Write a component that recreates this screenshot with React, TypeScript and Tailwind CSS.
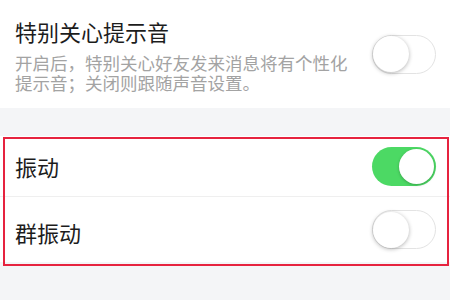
import React from "react";

function Toggle({ on }: { on: boolean }) {
  if (on) {
    return (
      <div className="w-[64px] h-[39px] rounded-full bg-[#4cd964] flex items-center justify-end p-[2px] shrink-0">
        <div className="w-[35px] h-[35px] rounded-full bg-white shadow-[0_1px_3px_rgba(0,0,0,0.25)]" />
      </div>
    );
  }
  return (
    <div className="w-[64px] h-[39px] rounded-full bg-white border-[1.5px] border-[#e3e3e3] flex items-center justify-start shrink-0">
      <div className="w-[36px] h-[36px] rounded-full bg-white shadow-[0_1px_4px_rgba(0,0,0,0.3)]" />
    </div>
  );
}

export default function App() {
  return (
    <div
      className="relative w-[450px] h-[300px] bg-[#f4f5f7] overflow-hidden"
      style={{ fontFamily: '"Noto Sans CJK SC", "Noto Sans", sans-serif' }}
    >
      <div className="bg-white h-[108px] pl-[15px] pr-[14px] flex items-center justify-between">
        <div className="w-[340px]">
          <div className="text-[22px] leading-[30px] text-[#1c1c1c]">特别关心提示音</div>
          <div className="mt-[7px] text-[17.5px] leading-[20px] text-[#a3a3a3]">
            开启后，特别关心好友发来消息将有个性化提示音；关闭则跟随声音设置。
          </div>
        </div>
        <Toggle on={false} />
      </div>
      <div className="h-[28px]" />
      <div className="bg-white">
        <div className="h-[61px] pl-[15px] pr-[14px] flex items-center justify-between border-b border-[#efefef]">
          <span className="text-[22px] leading-[30px] text-[#1c1c1c]">振动</span>
          <Toggle on={true} />
        </div>
        <div className="h-[65px] pl-[15px] pr-[14px] flex items-center justify-between">
          <span className="text-[22px] leading-[30px] text-[#1c1c1c] mt-[4px]">群振动</span>
          <Toggle on={false} />
        </div>
      </div>
      <div className="absolute left-[3px] top-[137px] w-[446px] h-[129px] border-2 border-[#e6233f] pointer-events-none" />
    </div>
  );
}
